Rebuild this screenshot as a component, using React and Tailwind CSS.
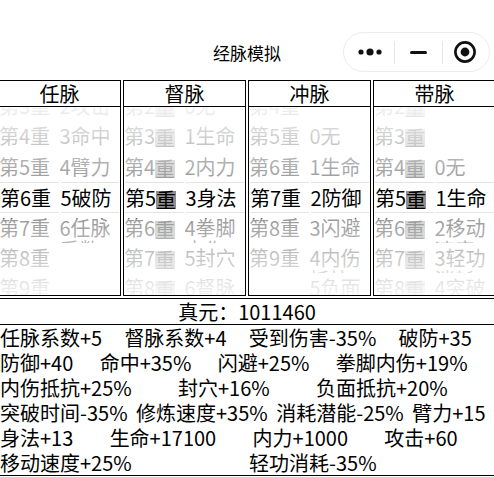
import React from 'react';

const COLUMNS = [
  {
    name: '任脉',
    left: ['第3重', '第4重', '第5重', '第6重', '第7重', '第8重', '第9重'],
    right: ['2攻击', '3命中', '4臂力', '5破防', '6任脉系数', '', ''],
    glitch: false
  },
  {
    name: '督脉',
    left: ['第2重', '第3重', '第4重', '第5重', '第6重', '第7重', '第8重'],
    right: ['0无', '1生命', '2内力', '3身法', '4拳脚内伤', '5封穴', '6督脉系数'],
    glitch: true
  },
  {
    name: '冲脉',
    left: ['第4重', '第5重', '第6重', '第7重', '第8重', '第9重', ''],
    right: ['', '0无', '1生命', '2防御', '3闪避', '4内伤抵抗', '5负面抵抗'],
    glitch: false
  },
  {
    name: '带脉',
    left: ['第2重', '第3重', '第4重', '第5重', '第6重', '第7重', '第8重'],
    right: ['', '', '0无', '1生命', '2移动速度', '3轻功消耗', '4突破时间'],
    glitch: true
  }
];

const STATS = [
  ['任脉系数+5', '督脉系数+4', '受到伤害-35%', '破防+35'],
  ['防御+40', '命中+35%', '闪避+25%', '拳脚内伤+19%'],
  ['内伤抵抗+25%', '封穴+16%', '负面抵抗+20%'],
  ['突破时间-35%', '修炼速度+35%', '消耗潜能-25%', '臂力+15'],
  ['身法+13', '生命+17100', '内力+1000', '攻击+60'],
  ['移动速度+25%', '轻功消耗-35%']
];

// one wheel of the picker, 7 visible rows, middle one selected
const Wheel = ({ items, glitch }) => (
  <div className="relative h-full overflow-hidden">
    <div className="mt-[-16px]">
      {items.map((text, i) => (
        <div
          key={i}
          className={`h-[30.4px] overflow-hidden pt-[4px] leading-[22px] whitespace-normal ${
            i === 3 ? 'border-y border-[#e3e3e3] mx-[1px]' : ''
          }`}
        >
          {glitch && text ? (
            <>
              {text.slice(0, 2)}
              <span className="inline-block h-[18px] leading-[18px] bg-[#8f8f8f] align-[-2px]">{text.slice(2)}</span>
            </>
          ) : (
            text
          )}
        </div>
      ))}
    </div>
    {/* fade masks above / below the selection */}
    <div className="absolute left-0 right-0 top-0 h-[75px] bg-linear-to-b from-white/95 to-white/60" />
    <div className="absolute left-0 right-0 bottom-0 h-[76px] bg-linear-to-t from-white/95 to-white/60" />
  </div>
);

const Capsule = () => (
  <div className="absolute right-[4px] top-[32px] flex h-[40px] w-[147px] items-center rounded-full border border-[#ececec] bg-white">
    <div className="flex w-[50px] justify-center pl-[3px]">
      <svg width="26" height="10" viewBox="0 0 26 10">
        <circle cx="3" cy="5" r="2.6" fill="#111" />
        <circle cx="12" cy="5" r="3.6" fill="#111" />
        <circle cx="21" cy="5" r="2.6" fill="#111" />
      </svg>
    </div>
    <div className="h-[23px] w-px bg-[#e6e6e6]" />
    <div className="flex w-[47px] justify-center">
      <div className="h-[3px] w-[17px] rounded-full bg-[#111]" />
    </div>
    <div className="h-[23px] w-px bg-[#e6e6e6]" />
    <div className="flex flex-1 justify-center pr-[2px]">
      <svg width="24" height="24" viewBox="0 0 24 24">
        <circle cx="12" cy="12" r="9.6" fill="none" stroke="#111" strokeWidth="2.6" />
        <circle cx="12" cy="12" r="4.4" fill="#111" />
      </svg>
    </div>
  </div>
);

const App = () => {
  return (
    <div className="w-[494px] h-[477px] overflow-hidden bg-white text-black font-['Noto_Sans_CJK_SC',sans-serif]">
      {/* nav bar */}
      <div className="relative flex h-[80px] items-start justify-center">
        <div className="mt-[41px] text-[17px] leading-[24px]">经脉模拟</div>
        <Capsule />
      </div>

      {/* four pickers */}
      <div className="ml-[-2px] flex gap-[2px]">
        {COLUMNS.map((col) => (
          <div key={col.name} className="w-[123px] shrink-0 border border-black">
            <div className="h-[26px] border-b border-black text-center text-[20px] leading-[25px]">{col.name}</div>
            <div className="grid h-[188px] grid-cols-2 text-[20px]">
              <Wheel items={col.left} glitch={col.glitch} />
              <Wheel items={col.right} glitch={false} />
            </div>
          </div>
        ))}
      </div>

      {/* zhenyuan */}
      <div className="mt-[2px] h-[27px] border-y border-black text-center text-[20px] leading-[25px]">
        真元：1011460
      </div>

      {/* bonuses */}
      <div className="border-b border-black text-[20px] leading-[25px]">
        {STATS.map((row, i) => (
          <div key={i} className="flex h-[25px] justify-between whitespace-nowrap">
            {row.map((s) => (
              <span key={s}>{s}</span>
            ))}
            <span />
          </div>
        ))}
      </div>
    </div>
  );
};

export default App;
